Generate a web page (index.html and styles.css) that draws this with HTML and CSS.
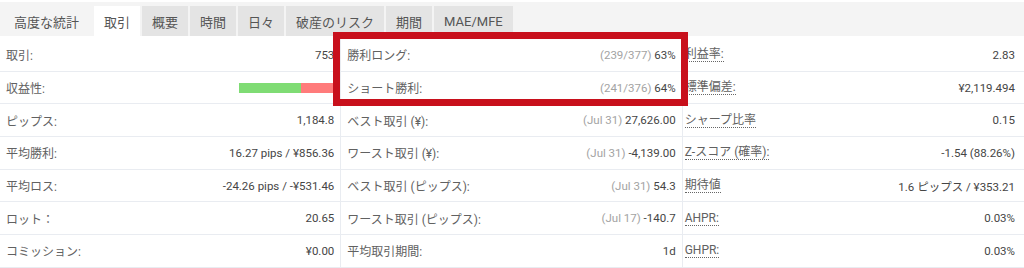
FILE: index.html
```html
<!DOCTYPE html>
<html lang="ja">
<head>
    <meta charset="UTF-8">
    <title>取引統計</title>
    <link rel="stylesheet" href="styles.css">
</head>
<body>
    <div class="tabs">
        <span class="tab tab-plain">高度な統計</span>
        <span class="tab tab-active">取引</span>
        <span class="tab">概要</span>
        <span class="tab">時間</span>
        <span class="tab">日々</span>
        <span class="tab">破産のリスク</span>
        <span class="tab">期間</span>
        <span class="tab">MAE/MFE</span>
    </div>

    <div class="stats">
        <div class="col">
            <div class="row"><span class="label">取引:</span><span class="value">753</span></div>
            <div class="row"><span class="label">収益性:</span><span class="bar"><span class="bar-win" style="width:64%"></span><span class="bar-loss"></span></span></div>
            <div class="row"><span class="label">ピップス:</span><span class="value">1,184.8</span></div>
            <div class="row"><span class="label">平均勝利:</span><span class="value">16.27 pips / ¥856.36</span></div>
            <div class="row"><span class="label">平均ロス:</span><span class="value">-24.26 pips / -¥531.46</span></div>
            <div class="row"><span class="label">ロット：</span><span class="value">20.65</span></div>
            <div class="row"><span class="label">コミッション:</span><span class="value">¥0.00</span></div>
        </div>
        <div class="col">
            <div class="row"><span class="label">勝利ロング:</span><span class="value"><span class="dim">(239/377)</span> 63%</span></div>
            <div class="row"><span class="label">ショート勝利:</span><span class="value"><span class="dim">(241/376)</span> 64%</span></div>
            <div class="row"><span class="label">ベスト取引 (¥):</span><span class="value"><span class="dim">(Jul 31)</span> 27,626.00</span></div>
            <div class="row"><span class="label">ワースト取引 (¥):</span><span class="value"><span class="dim">(Jul 31)</span> -4,139.00</span></div>
            <div class="row"><span class="label">ベスト取引 (ピップス):</span><span class="value"><span class="dim">(Jul 31)</span> 54.3</span></div>
            <div class="row"><span class="label">ワースト取引 (ピップス):</span><span class="value"><span class="dim">(Jul 17)</span> -140.7</span></div>
            <div class="row"><span class="label">平均取引期間:</span><span class="value">1d</span></div>
        </div>
        <div class="col">
            <div class="row"><span class="label dotted">利益率:</span><span class="value">2.83</span></div>
            <div class="row"><span class="label dotted">標準偏差:</span><span class="value">¥2,119.494</span></div>
            <div class="row"><span class="label dotted">シャープ比率</span><span class="value">0.15</span></div>
            <div class="row"><span class="label dotted">Z-スコア (確率):</span><span class="value">-1.54 (88.26%)</span></div>
            <div class="row"><span class="label dotted">期待値</span><span class="value">1.6 ピップス / ¥353.21</span></div>
            <div class="row"><span class="label dotted">AHPR:</span><span class="value">0.03%</span></div>
            <div class="row"><span class="label dotted">GHPR:</span><span class="value">0.03%</span></div>
        </div>
    </div>

    <div class="highlight"></div>
</body>
</html>
```

FILE: styles.css
```css
body {
    margin: 0;
    font-family: Roboto, "Noto Sans CJK JP", sans-serif;
    font-size: 12px;
    color: #555;
    background-color: #fff;
    position: relative;
}
.tabs {
    display: flex;
    align-items: flex-end;
    height: 34px;
    margin-top: 2px;
    background-color: #f4f4f4;
}
.tab {
    display: flex;
    align-items: center;
    height: 30px;
    padding: 0 10px;
    margin-right: 2px;
    font-size: 13px;
    color: #555;
    background-color: #e4e4e4;
}
.tab-plain {
    background-color: transparent;
    padding: 0 13px 0 14px;
}
.tab-active {
    background-color: #fff;
}
.stats {
    display: grid;
    grid-template-columns: 1fr 1fr 1fr;
    padding-top: 3px;
}
.col {
    border-right: 1px solid #e9ecf1;
}
.col:last-child {
    border-right: none;
}
.row {
    display: flex;
    align-items: center;
    justify-content: space-between;
    height: 31.7px;
    padding: 0 6px;
    border-bottom: 1px solid #e9ecf1;
}
.col:last-child .row {
    padding: 0 9px 0 2px;
}
.label {
    color: #616161;
}
.dotted {
    border-bottom: 1px dotted #666;
    line-height: 14px;
}
.value {
    font-size: 11.5px;
    color: #454545;
}
.dim {
    color: #a3a3a3;
}
.bar {
    display: flex;
    width: 97px;
    height: 10px;
    margin-right: -2px;
}
.bar-win {
    background-color: #7fdc74;
}
.bar-loss {
    flex: 1;
    background-color: #ff7b7b;
}
.highlight {
    position: absolute;
    left: 333px;
    top: 32px;
    width: 341px;
    height: 60px;
    border: 7px solid #c8101c;
}
```
